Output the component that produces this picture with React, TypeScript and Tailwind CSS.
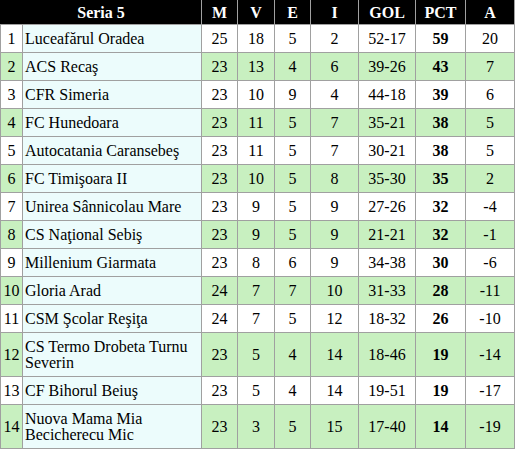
import React from 'react';

type Row = {
    pos: number;
    team: string;
    m: number;
    v: number;
    e: number;
    i: number;
    gol: string;
    pct: number;
    a: number;
};

const rows: Row[] = [
    { pos: 1, team: 'Luceafărul Oradea', m: 25, v: 18, e: 5, i: 2, gol: '52-17', pct: 59, a: 20 },
    { pos: 2, team: 'ACS Recaş', m: 23, v: 13, e: 4, i: 6, gol: '39-26', pct: 43, a: 7 },
    { pos: 3, team: 'CFR Simeria', m: 23, v: 10, e: 9, i: 4, gol: '44-18', pct: 39, a: 6 },
    { pos: 4, team: 'FC Hunedoara', m: 23, v: 11, e: 5, i: 7, gol: '35-21', pct: 38, a: 5 },
    { pos: 5, team: 'Autocatania Caransebeş', m: 23, v: 11, e: 5, i: 7, gol: '30-21', pct: 38, a: 5 },
    { pos: 6, team: 'FC Timişoara II', m: 23, v: 10, e: 5, i: 8, gol: '35-30', pct: 35, a: 2 },
    { pos: 7, team: 'Unirea Sânnicolau Mare', m: 23, v: 9, e: 5, i: 9, gol: '27-26', pct: 32, a: -4 },
    { pos: 8, team: 'CS Naţional Sebiş', m: 23, v: 9, e: 5, i: 9, gol: '21-21', pct: 32, a: -1 },
    { pos: 9, team: 'Millenium Giarmata', m: 23, v: 8, e: 6, i: 9, gol: '34-38', pct: 30, a: -6 },
    { pos: 10, team: 'Gloria Arad', m: 24, v: 7, e: 7, i: 10, gol: '31-33', pct: 28, a: -11 },
    { pos: 11, team: 'CSM Şcolar Reşiţa', m: 24, v: 7, e: 5, i: 12, gol: '18-32', pct: 26, a: -10 },
    { pos: 12, team: 'CS Termo Drobeta Turnu Severin', m: 23, v: 5, e: 4, i: 14, gol: '18-46', pct: 19, a: -14 },
    { pos: 13, team: 'CF Bihorul Beiuş', m: 23, v: 5, e: 4, i: 14, gol: '19-51', pct: 19, a: -17 },
    { pos: 14, team: 'Nuova Mama Mia Becicherecu Mic', m: 23, v: 3, e: 5, i: 15, gol: '17-40', pct: 14, a: -19 },
];

const App: React.FC = () => {
    return (
        <div className="bg-white w-[518px] h-[455px] font-['Liberation_Serif','Times_New_Roman',serif] text-[16px] leading-[16px] text-black">
            <table className="table-fixed border-collapse w-[514px]">
                <colgroup>
                    <col className="w-[22px]" />
                    <col className="w-[179px]" />
                    <col className="w-[36px]" />
                    <col className="w-[37px]" />
                    <col className="w-[36px]" />
                    <col className="w-[48px]" />
                    <col className="w-[57px]" />
                    <col className="w-[50px]" />
                    <col className="w-[49px]" />
                </colgroup>
                <thead>
                    <tr className="bg-black text-white font-bold">
                        <th colSpan={2} className="border border-[#a0a0a0] border-t-black border-l-black pt-[4px] pb-[3px] text-center">Seria 5</th>
                        {['M', 'V', 'E', 'I', 'GOL', 'PCT', 'A'].map((h) => (
                            <th key={h} className="border border-[#a0a0a0] border-t-black pt-[4px] pb-[3px] text-center">{h}</th>
                        ))}
                    </tr>
                </thead>
                <tbody>
                    {rows.map((r) => {
                        // odd rows white, even rows light green; the team column stays pale cyan
                        const bg = r.pos % 2 === 0 ? 'bg-[#c8f0c0]' : 'bg-white';
                        const cell = `border border-[#a0a0a0] py-[5.5px] text-center ${bg}`;
                        return (
                            <tr key={r.pos}>
                                <td className={cell}>{r.pos}</td>
                                <td className="border border-[#a0a0a0] py-[5.5px] pl-[2px] pr-[2px] text-left bg-[#ecfcfc]">{r.team}</td>
                                <td className={cell}>{r.m}</td>
                                <td className={cell}>{r.v}</td>
                                <td className={cell}>{r.e}</td>
                                <td className={cell}>{r.i}</td>
                                <td className={cell}>{r.gol}</td>
                                <td className={`${cell} font-bold`}>{r.pct}</td>
                                <td className={cell}>{r.a}</td>
                            </tr>
                        );
                    })}
                </tbody>
            </table>
        </div>
    );
};

export default App;
